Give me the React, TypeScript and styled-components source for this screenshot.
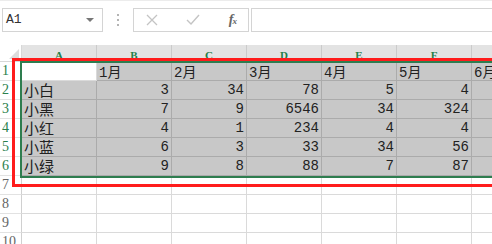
import React from 'react';
import styled, {createGlobalStyle} from "styled-components";

const GlobalStyle = createGlobalStyle`
  body {
    margin: 0;
    background: #ffffff;
    overflow: hidden;
    font-family: "Liberation Mono", "Noto Sans CJK SC", monospace;
  }
`

const COLS = ['A', 'B', 'C', 'D', 'E', 'F', 'G']

const data: string[][] = [
    ['', '1月', '2月', '3月', '4月', '5月', '6月'],
    ['小白', '3', '34', '78', '5', '4', ''],
    ['小黑', '7', '9', '6546', '34', '324', ''],
    ['小红', '4', '1', '234', '4', '4', ''],
    ['小蓝', '6', '3', '33', '34', '56', ''],
    ['小绿', '9', '8', '88', '7', '87', ''],
]

const TOTAL_ROWS = 10

export default function App() {
    return (
        <>
            <GlobalStyle/>
            <Page>
                <TopLine/>
                <FormulaBar>
                    <NameBox>
                        <span>A1</span>
                        <Caret/>
                    </NameBox>
                    <Dots>
                        <i/><i/><i/>
                    </Dots>
                    <FuncBox>
                        <svg width="12" height="12" viewBox="0 0 12 12">
                            <path d="M1 1 L11 11 M11 1 L1 11" stroke="#c4c4c4" strokeWidth="1.3" fill="none"/>
                        </svg>
                        <svg width="14" height="11" viewBox="0 0 14 11">
                            <path d="M1 6 L5 10 L13 1" stroke="#c4c4c4" strokeWidth="1.4" fill="none"/>
                        </svg>
                        <Fx>f<small>x</small></Fx>
                    </FuncBox>
                    <InputBox/>
                </FormulaBar>
                <Sheet>
                    <Corner>
                        <svg width="10" height="10" viewBox="0 0 10 10">
                            <path d="M10 0 L10 10 L0 10 Z" fill="#dcdcdc"/>
                        </svg>
                    </Corner>
                    {COLS.map(c => (
                        <ColHead key={c}>{c}</ColHead>
                    ))}
                    {Array.from({length: TOTAL_ROWS}).map((_, r) => {
                        const row = data[r]
                        return (
                            <React.Fragment key={r}>
                                <RowHead $active={!!row}>{r + 1}</RowHead>
                                {COLS.map((c, ci) => {
                                    const value = row ? row[ci] : ''
                                    const selected = !!row && !(r === 0 && ci === 0)
                                    const numeric = /^\d+$/.test(value)
                                    return (
                                        <Cell key={c} $selected={selected} $numeric={numeric}>
                                            {value}
                                        </Cell>
                                    )
                                })}
                            </React.Fragment>
                        )
                    })}
                </Sheet>
                <Selection/>
                <Highlight/>
            </Page>
        </>
    );
}

const Page = styled.div`
  position: relative;
  width: 492px;
  height: 244px;
  overflow: hidden;
`

const TopLine = styled.div`
  height: 2px;
  border-top: 1px solid #ececec;
  box-sizing: border-box;
`

const FormulaBar = styled.div`
  display: flex;
  align-items: center;
  height: 43px;
  padding: 0 0 8px 2px;
  box-sizing: border-box;
`

const NameBox = styled.div`
  width: 101px;
  height: 24px;
  box-sizing: border-box;
  border: 1px solid #d4d4d4;
  display: flex;
  align-items: center;
  justify-content: space-between;
  padding: 0 8px 0 3px;
  font-size: 13px;
  color: #333;
`

const Caret = styled.div`
  width: 0;
  height: 0;
  border-left: 4px solid transparent;
  border-right: 4px solid transparent;
  border-top: 4px solid #777;
`

const Dots = styled.div`
  display: flex;
  flex-direction: column;
  gap: 3px;
  margin: 0 14px;

  i {
    display: block;
    width: 2px;
    height: 2px;
    background: #b4b4b4;
  }
`

const FuncBox = styled.div`
  width: 116px;
  height: 24px;
  box-sizing: border-box;
  border: 1px solid #d4d4d4;
  display: flex;
  align-items: center;
  justify-content: space-between;
  padding: 0 12px;
`

const Fx = styled.span`
  font-family: "Liberation Serif", serif;
  font-style: italic;
  font-weight: bold;
  font-size: 14px;
  color: #666;
  letter-spacing: -1px;

  small {
    font-size: 9px;
  }
`

const InputBox = styled.div`
  flex: 1;
  height: 24px;
  margin-left: 2px;
  box-sizing: border-box;
  border: 1px solid #d4d4d4;
  border-right: none;
`

const Sheet = styled.div`
  display: grid;
  grid-template-columns: 22px repeat(7, 75px);
  grid-template-rows: 17px repeat(${TOTAL_ROWS}, 19px);
`

const Corner = styled.div`
  background: #ffffff;
  border-right: 1px solid #d8d8d8;
  border-bottom: 1px solid #d8d8d8;
  display: flex;
  align-items: flex-end;
  justify-content: flex-end;
  padding: 0 2px 2px 0;
`

const ColHead = styled.div`
  background: #e3e3e3;
  border-right: 1px solid #cbcbcb;
  border-bottom: 1px solid #cbcbcb;
  color: #23804a;
  font-family: "Liberation Serif", serif;
  font-weight: bold;
  font-size: 11px;
  display: flex;
  align-items: center;
  justify-content: center;
  padding-top: 3px;
`

const RowHead = styled.div<{ $active: boolean }>`
  background: #ffffff;
  border-right: 1px solid #d0d0d0;
  border-bottom: 1px solid #e2e2e2;
  color: ${p => p.$active ? '#2a7f4c' : '#666'};
  font-family: "Liberation Serif", serif;
  font-size: 14px;
  display: flex;
  align-items: center;
  padding-left: 2px;
`

const Cell = styled.div<{ $selected: boolean; $numeric: boolean }>`
  background: ${p => p.$selected ? '#c8c8c8' : '#ffffff'};
  border-right: 1px solid ${p => p.$selected ? '#ababab' : '#dadada'};
  border-bottom: 1px solid ${p => p.$selected ? '#ababab' : '#dadada'};
  color: #222;
  font-size: 14px;
  display: flex;
  align-items: center;
  justify-content: ${p => p.$numeric ? 'flex-end' : 'flex-start'};
  padding: 0 2px;
  white-space: nowrap;
  overflow: hidden;

  &:nth-child(8n + 2) {
    font-size: 15px;
  }
`

const Selection = styled.div`
  position: absolute;
  left: 20px;
  top: 61px;
  width: 500px;
  height: 117px;
  box-sizing: border-box;
  border: 2px solid #2e7d4f;
  pointer-events: none;
`

const Highlight = styled.div`
  position: absolute;
  left: 12px;
  top: 58px;
  width: 500px;
  height: 129px;
  box-sizing: border-box;
  border: 3px solid #ff1c1c;
  pointer-events: none;
`
